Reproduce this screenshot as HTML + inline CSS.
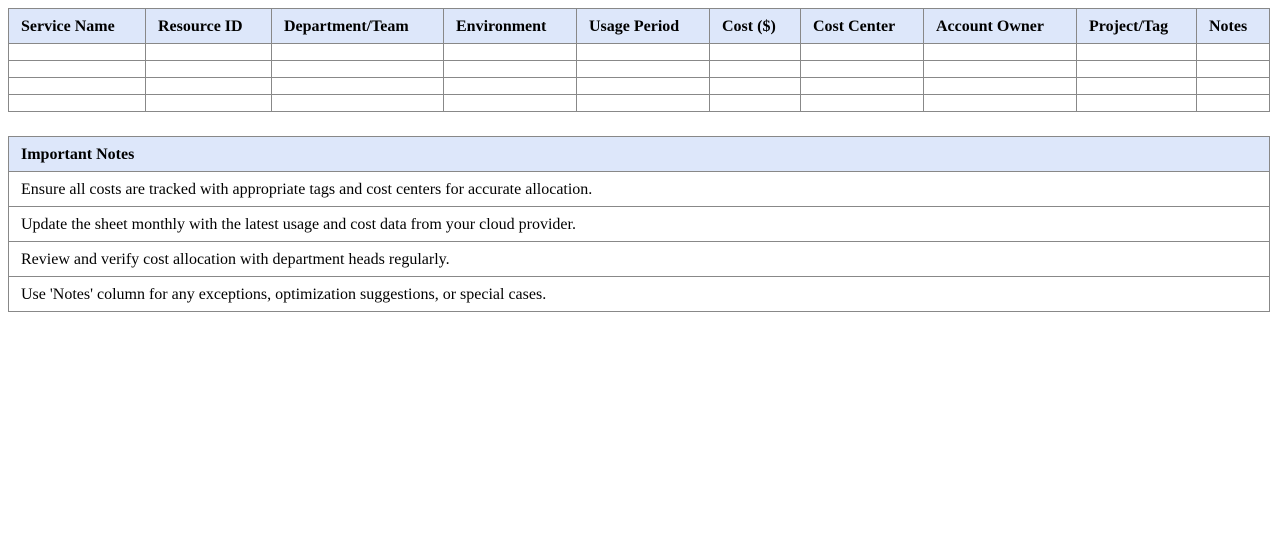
<!DOCTYPE html>
<html><head><meta charset="utf-8"><style>
body{margin:0;background:#fff;font-family:"Liberation Serif",serif;font-size:16px;color:#000}
table{border-collapse:collapse;position:absolute;left:8px;table-layout:fixed}
td,th{border:1px solid #888;padding:0 12px;text-align:left;white-space:nowrap;overflow:hidden}
th{background:#dde7fa;font-weight:bold}
#t1{top:8px;width:1262px}
#t1 th{height:33px;padding-top:1px}
#t1 td{height:16px;padding:0;font-size:10px}
#t2{top:136px;width:1262px}
#t2 th,#t2 td{height:33px;padding-top:1px}
</style></head><body>
<table id="t1">
<colgroup><col style="width:137px"><col style="width:126px"><col style="width:172px"><col style="width:133px"><col style="width:133px"><col style="width:91px"><col style="width:123px"><col style="width:153px"><col style="width:120px"><col style="width:73px"></colgroup>
<tr><th>Service Name</th><th>Resource ID</th><th>Department/Team</th><th>Environment</th><th>Usage Period</th><th>Cost ($)</th><th>Cost Center</th><th>Account Owner</th><th>Project/Tag</th><th>Notes</th></tr>
<tr><td></td><td></td><td></td><td></td><td></td><td></td><td></td><td></td><td></td><td></td></tr>
<tr><td></td><td></td><td></td><td></td><td></td><td></td><td></td><td></td><td></td><td></td></tr>
<tr><td></td><td></td><td></td><td></td><td></td><td></td><td></td><td></td><td></td><td></td></tr>
<tr><td></td><td></td><td></td><td></td><td></td><td></td><td></td><td></td><td></td><td></td></tr>
</table>
<table id="t2">
<tr><th>Important Notes</th></tr>
<tr><td>Ensure all costs are tracked with appropriate tags and cost centers for accurate allocation.</td></tr>
<tr><td>Update the sheet monthly with the latest usage and cost data from your cloud provider.</td></tr>
<tr><td>Review and verify cost allocation with department heads regularly.</td></tr>
<tr><td>Use 'Notes' column for any exceptions, optimization suggestions, or special cases.</td></tr>
</table>
</body></html>
